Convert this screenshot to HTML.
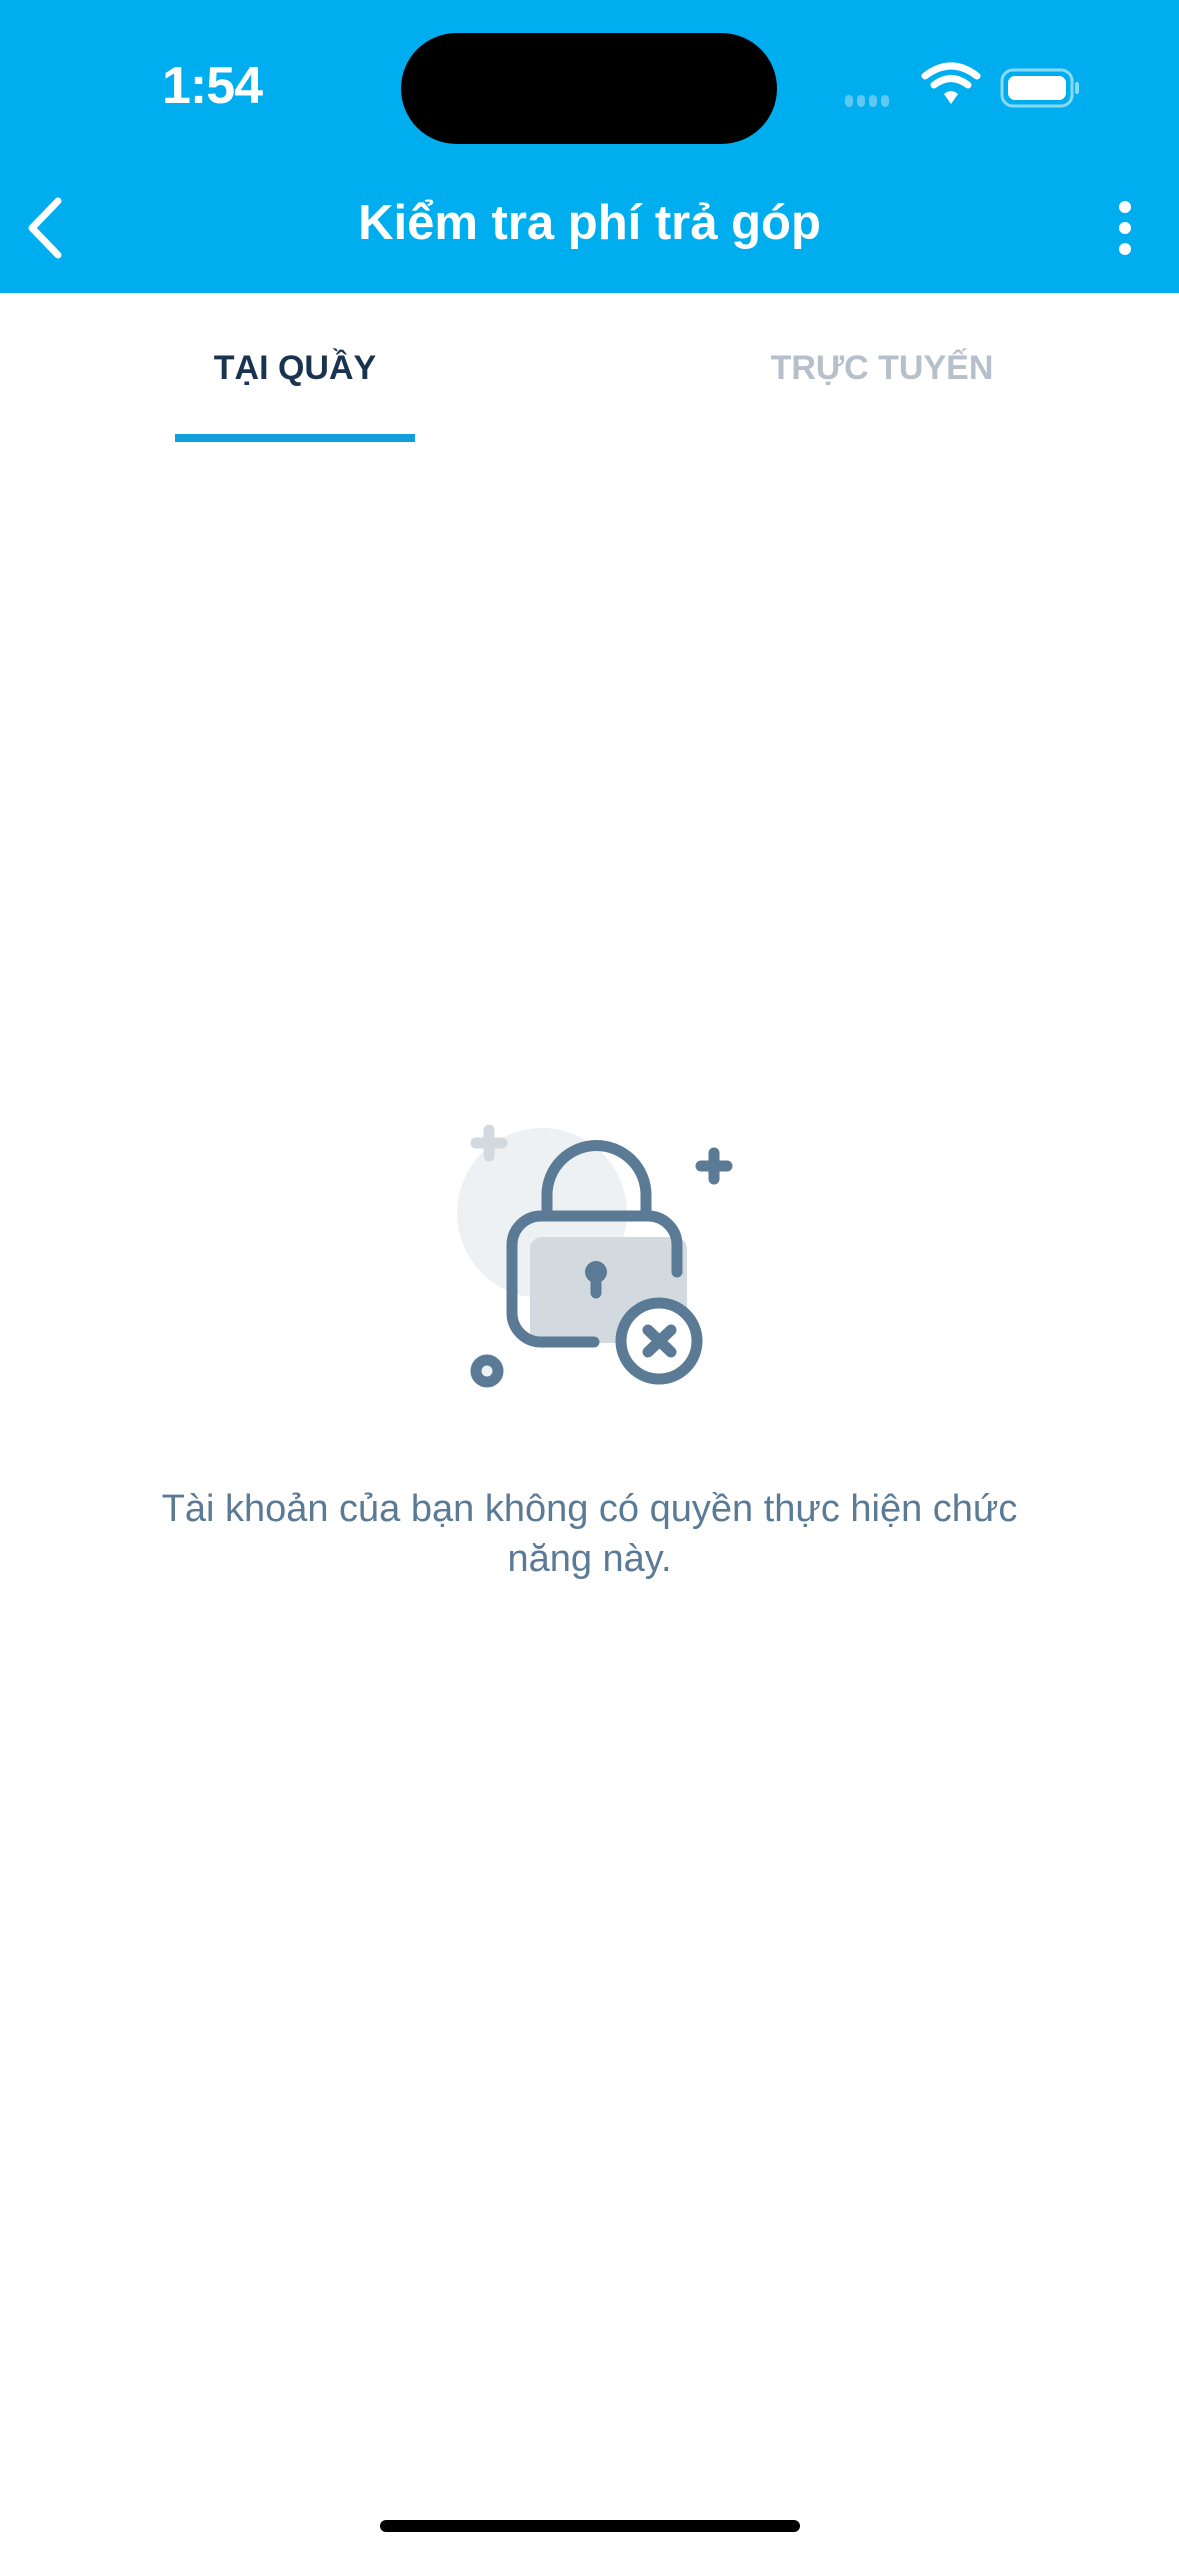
<!DOCTYPE html>
<html><head><meta charset="utf-8"><style>
html,body{margin:0;padding:0;width:1179px;height:2556px;background:#fff;overflow:hidden;font-family:"Liberation Sans",sans-serif;position:relative}
.hdr{position:absolute;left:0;top:0;width:1179px;height:293px;background:#00AEEF}
.abs{position:absolute}
</style></head><body>
<div class="hdr"></div>
<div class="abs" style="left:162px;top:56px;font-size:52px;font-weight:600;color:#fff;letter-spacing:-1px">1:54</div>
<div class="abs" style="left:401px;top:33px;width:376px;height:111px;background:#000;border-radius:56px"></div>
<svg class="abs" style="left:840px;top:60px" width="260" height="60" viewBox="0 0 260 60">
<g fill="#5fc8f2"><rect x="5" y="35" width="8" height="12" rx="4"/><rect x="17" y="35" width="8" height="12" rx="4"/><rect x="29" y="35" width="8" height="12" rx="4"/><rect x="41" y="35" width="8" height="12" rx="4"/></g>
<g fill="none" stroke="#fff" stroke-width="7" stroke-linecap="round"><path d="M85 16 Q111 -4 137 16"/><path d="M94 25 Q111 12 128 25"/></g>
<path d="M104 34 Q111 28 118 34 L111 44 Z" fill="#fff"/>
<rect x="162" y="10" width="70" height="36" rx="11" fill="none" stroke="#8ad9f7" stroke-width="3"/>
<rect x="168" y="16" width="58" height="24" rx="7" fill="#fff"/>
<rect x="235" y="22" width="4" height="12" rx="2" fill="#8ad9f7"/>
</svg>
<svg class="abs" style="left:20px;top:195px" width="50" height="66"><path d="M38 6 L12 33 L38 60" fill="none" stroke="#fff" stroke-width="7" stroke-linecap="round" stroke-linejoin="round"/></svg>
<div class="abs" style="left:0;width:1179px;top:195px;text-align:center;font-size:49px;font-weight:600;color:#fff">Kiểm tra phí trả góp</div>
<svg class="abs" style="left:1110px;top:200px" width="30" height="56"><g fill="#fff"><circle cx="15" cy="7" r="6"/><circle cx="15" cy="28" r="6"/><circle cx="15" cy="49" r="6"/></g></svg>
<div class="abs" style="left:145px;width:300px;top:349px;text-align:center;font-size:34px;font-weight:700;color:#1a3350">TẠI QUẦY</div>
<div class="abs" style="left:732px;width:300px;top:349px;text-align:center;font-size:34px;font-weight:700;color:#b6c0ca">TRỰC TUYẾN</div>
<div class="abs" style="left:175px;top:434px;width:240px;height:8px;background:#12A0DD"></div>
<svg class="abs" style="left:420px;top:1100px" width="340" height="300" viewBox="0 0 340 300">
<circle cx="122" cy="113" r="85" fill="#edf1f4"/>
<rect x="110" y="137" width="157" height="106" rx="12" fill="#d3dadf"/>
<g fill="none" stroke="#5a7a96" stroke-width="11" stroke-linecap="round">
<path d="M69 30 V56 M56 43 H82" stroke="#d3dadf"/>
<path d="M294 53 V79 M281 66 H307"/>
<path d="M127 116 V95 A49.5 49.5 0 0 1 226 95 V116"/>
<path d="M257 172 V145 A29 29 0 0 0 228 116 H121 A29 29 0 0 0 92 145 V213 A29 29 0 0 0 121 242 H174"/>
<path d="M176 172 V193"/>
<circle cx="239" cy="241" r="38" fill="#fff"/>
<path d="M228 230 L251 252 M251 230 L228 252"/>
<circle cx="67" cy="271" r="11" fill="#edf1f4"/>
</g>
<circle cx="176" cy="172" r="11" fill="#5a7a96"/>
</svg>
<div class="abs" style="left:100px;width:979px;top:1484px;text-align:center;font-size:38px;line-height:50px;color:#5a7a96">Tài khoản của bạn không có quyền thực hiện chức<br>năng này.</div>
<div class="abs" style="left:380px;top:2520px;width:420px;height:12px;border-radius:6px;background:#000"></div>
</body></html>
